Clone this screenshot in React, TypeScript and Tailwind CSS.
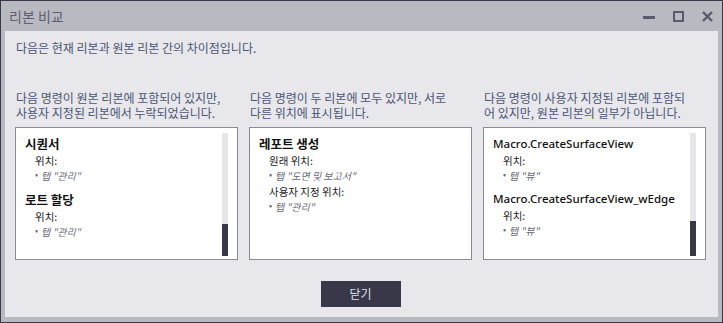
import React from 'react'

const font = { fontFamily: '"Noto Sans CJK KR", "Noto Sans", sans-serif' }

function Scrollbar({ thumbTop }: { thumbTop: string }) {
  return (
    <div className="absolute right-[9px] top-[5px] bottom-[3px] w-[6px] bg-[#e6e6e8]">
      <div className={`absolute left-0 right-0 bottom-0 bg-[#383848] ${thumbTop}`} />
    </div>
  )
}

function Bullet({ children }: { children: React.ReactNode }) {
  return (
    <div className="flex items-center gap-[3px] pl-[19px] h-[12px] text-[10px] italic text-[#6a6a78]">
      <span className="not-italic text-[9px]">•</span>
      <span>{children}</span>
    </div>
  )
}

function Label({ children, tall }: { children: React.ReactNode; tall?: boolean }) {
  return (
    <div className={`pl-[19px] flex items-end text-[10.5px] text-[#1a1a22] ${tall ? 'h-[19px]' : 'h-[17px]'}`}>
      {children}
    </div>
  )
}

function Title({ children, latin }: { children: React.ReactNode; latin?: boolean }) {
  return (
    <div
      className={`pl-[9px] h-[16px] flex items-center whitespace-nowrap text-[#111] ${latin ? 'text-[11.5px] font-medium' : 'text-[12.5px] font-bold'}`}
      style={latin ? { fontFamily: '"Noto Sans", sans-serif' } : undefined}
    >
      {children}
    </div>
  )
}

export default function App() {
  return (
    <div className="w-[723px] h-[323px] bg-[#393948] p-px" style={font}>
      <div className="flex h-full flex-col bg-[#b9b9c1] px-[4px] pb-[5px]">
        <div className="flex h-[30px] items-center justify-between">
          <span className="pl-[4px] text-[14px] text-[#5e5e70]">리본 비교</span>
          <div className="flex items-center gap-[18px] pr-[5px] text-[#5a5a6a]">
            <svg width="12" height="12" viewBox="0 0 12 12">
              <rect x="0" y="6" width="12" height="3" fill="currentColor" />
            </svg>
            <svg width="11" height="11" viewBox="0 0 11 11">
              <rect x="1" y="1" width="9" height="9" fill="none" stroke="currentColor" strokeWidth="2" />
            </svg>
            <svg width="11" height="11" viewBox="0 0 11 11">
              <path d="M1 1L10 10M10 1L1 10" stroke="currentColor" strokeWidth="2.4" />
            </svg>
          </div>
        </div>
        <div className="flex flex-1 flex-col bg-[#e7e7ec] pl-[10px] pr-[12px] text-[#4b5672]">
          <div className="mt-[9px] pl-[1px] text-[12px] leading-[16px]">
            다음은 현재 리본과 원본 리본 간의 차이점입니다.
          </div>
          <div className="mt-[34px] grid grid-cols-3 gap-[11px]">
            <div>
              <div className="pl-[1px] text-[12px] leading-[15px] h-[37px]">
                다음 명령이 원본 리본에 포함되어 있지만,
                <br />
                사용자 지정된 리본에서 누락되었습니다.
              </div>
              <div className="relative h-[133px] border border-[#8a8a97] bg-white pt-[8px]">
                <Title>시퀀서</Title>
                <Label>위치:</Label>
                <Bullet>탭 "관리"</Bullet>
                <div className="h-[11px]" />
                <Title>로트 할당</Title>
                <Label>위치:</Label>
                <Bullet>탭 "관리"</Bullet>
                <Scrollbar thumbTop="top-[91px]" />
              </div>
            </div>
            <div>
              <div className="pl-[1px] text-[12px] leading-[15px] h-[37px]">
                다음 명령이 두 리본에 모두 있지만, 서로
                <br />
                다른 위치에 표시됩니다.
              </div>
              <div className="relative h-[133px] border border-[#8a8a97] bg-white pt-[8px]">
                <Title>레포트 생성</Title>
                <Label>원래 위치:</Label>
                <Bullet>탭 "도면 및 보고서"</Bullet>
                <Label tall>사용자 지정 위치:</Label>
                <Bullet>탭 "관리"</Bullet>
              </div>
            </div>
            <div>
              <div className="pl-[1px] text-[12px] leading-[15px] h-[37px]">
                다음 명령이 사용자 지정된 리본에 포함되
                <br />
                어 있지만, 원본 리본의 일부가 아닙니다.
              </div>
              <div className="relative h-[133px] border border-[#8a8a97] bg-white pt-[8px]">
                <Title latin>Macro.CreateSurfaceView</Title>
                <Label>위치:</Label>
                <Bullet>탭 "뷰"</Bullet>
                <div className="h-[10px]" />
                <Title latin>Macro.CreateSurfaceView_wEdge</Title>
                <Label>위치:</Label>
                <Bullet>탭 "뷰"</Bullet>
                <Scrollbar thumbTop="top-[88px]" />
              </div>
            </div>
          </div>
          <div className="mt-[21px] flex justify-center">
            <button
              type="button"
              className="h-[26px] w-[80px] bg-[#383848] text-[12px] text-[#dde0ec]"
            >
              닫기
            </button>
          </div>
        </div>
      </div>
    </div>
  )
}
